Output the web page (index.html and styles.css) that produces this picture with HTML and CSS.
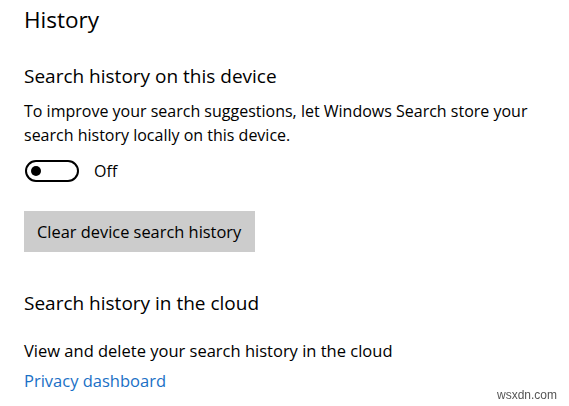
FILE: index.html
```html
<!DOCTYPE html>
<html lang="en">
<head>
    <meta charset="UTF-8">
    <title>History</title>
    <link rel="stylesheet" href="styles.css">
</head>
<body>

<div class="page">
    <h1 class="page-title">History</h1>

    <div class="section">
        <h2 class="section-title">Search history on this device</h2>
        <p class="desc">To improve your search suggestions, let Windows Search store your search history locally on this device.</p>
        <div class="toggle-row">
            <span class="toggle"><span class="knob"></span></span>
            <span class="toggle-label">Off</span>
        </div>
        <button class="btn">Clear device search history</button>
    </div>

    <div class="section cloud">
        <h2 class="section-title">Search history in the cloud</h2>
        <p class="desc">View and delete your search history in the cloud</p>
        <a class="link" href="#">Privacy dashboard</a>
    </div>
</div>

<div class="watermark">wsxdn.com</div>

</body>
</html>
```

FILE: styles.css
```css
body {
    margin: 0;
    background-color: #fff;
    color: #000;
    font-family: 'Open Sans', 'Noto Sans', sans-serif;
}

.page {
    padding: 0 0 0 24px;
}

.page-title {
    margin: 0;
    padding-top: 4px;
    font-size: 22.5px;
    font-weight: 400;
    line-height: 32px;
}

.section {
    margin-top: 28px;
}

.section-title {
    margin: 0;
    font-size: 19px;
    font-weight: 400;
    line-height: 24px;
}

.desc {
    margin: 11px 0 0;
    font-size: 16px;
    line-height: 24px;
}

.toggle-row {
    display: flex;
    align-items: center;
    gap: 15px;
    margin-top: 13px;
}

.toggle {
    box-sizing: border-box;
    width: 54px;
    height: 22px;
    margin-left: 1px;
    border: 2.5px solid #000;
    border-radius: 11px;
    display: flex;
    align-items: center;
    padding-left: 3.5px;
}

.knob {
    width: 10px;
    height: 10px;
    border-radius: 50%;
    background-color: #000;
}

.toggle-label {
    font-size: 16px;
}

.btn {
    display: block;
    margin-top: 29px;
    width: 231px;
    height: 41px;
    padding: 0 13px;
    border: none;
    background-color: #ccc;
    color: #000;
    font-family: inherit;
    font-size: 16.4px;
    text-align: left;
}

.cloud {
    margin-top: 39px;
}

.cloud .desc {
    margin-top: 24px;
    font-size: 16.5px;
}

.link {
    display: block;
    margin-top: 6px;
    color: #1a70c6;
    text-decoration: none;
    font-size: 16.5px;
    line-height: 24px;
}

.watermark {
    position: fixed;
    right: 12px;
    bottom: 4px;
    font-family: 'Liberation Sans', sans-serif;
    font-size: 12px;
    line-height: 14px;
    color: #555;
}
```
